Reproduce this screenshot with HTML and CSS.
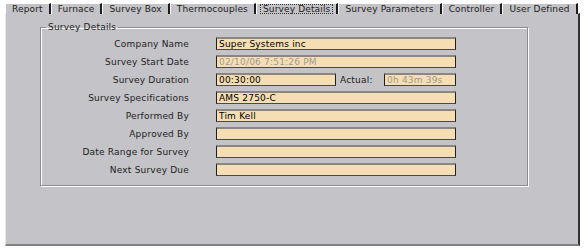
FILE: index.html
```html
<!DOCTYPE html>
<html lang="en">
<head>
  <meta charset="UTF-8" />
  <title>Survey Details</title>
  <link rel="stylesheet" href="styles.css">
</head>
<body>

  <div class="tabs">
    <span class="tab">Report</span>
    <span class="tab">Furnace</span>
    <span class="tab">Survey Box</span>
    <span class="tab">Thermocouples</span>
    <span class="tab active"><span class="focus">Survey Details</span></span>
    <span class="tab">Survey Parameters</span>
    <span class="tab">Controller</span>
    <span class="tab">User Defined</span>
  </div>

  <section class="panel">
    <fieldset class="group">
      <legend>Survey Details</legend>

      <div class="form">
        <label>Company Name</label>
        <div class="field">Super Systems inc</div>

        <label>Survey Start Date</label>
        <div class="field disabled">02/10/06 7:51:26 PM</div>

        <label>Survey Duration</label>
        <div class="duration-row">
          <div class="field">00:30:00</div>
          <span class="actual-label">Actual:</span>
          <div class="field disabled">0h 43m 39s</div>
        </div>

        <label>Survey Specifications</label>
        <div class="field">AMS 2750-C</div>

        <label>Performed By</label>
        <div class="field">Tim Kell</div>

        <label>Approved By</label>
        <div class="field"></div>

        <label>Date Range for Survey</label>
        <div class="field"></div>

        <label>Next Survey Due</label>
        <div class="field"></div>
      </div>
    </fieldset>
  </section>

</body>
</html>
```

FILE: styles.css
```css
body {
  margin: 0;
  padding: 3px 7px 0 5px;
  background: #fff;
  font-family: "DejaVu Sans", sans-serif;
  font-size: 9px;
  letter-spacing: 0.2px;
  color: #222;
}

.tabs {
  display: flex;
  height: 10px;
  letter-spacing: 0.15px;
}

.tab {
  display: block;
  height: 11px;
  line-height: 10px;
  padding: 0 6px;
  background: #c4c3c7;
  border-top: 1px solid #fff;
  border-left: 1px solid #fff;
  border-right: 2px solid #1c1c1c;
  box-sizing: border-box;
  white-space: nowrap;
}

.tab.active {
  padding: 0 3px;
}

.focus {
  display: inline-block;
  line-height: 8px;
  padding: 0 2px;
  border: 1px dotted #333;
}

.panel {
  height: 233px;
  box-sizing: border-box;
  background: #c4c3c7;
  border-top: 1px solid #e6e5e8;
  border-left: 1px solid #e6e5e8;
  border-right: 2px solid #333;
  border-bottom: 2px solid #808080;
  padding: 8px 0 0 34px;
}

.group {
  width: 488px;
  box-sizing: border-box;
  margin: 0;
  padding: 4px 0 9px 0;
  border: 1px solid #8e8c90;
  box-shadow: inset 1px 1px 0 #fff, 1px 1px 0 #fff;
}

.group legend {
  margin-left: 5px;
  padding: 0 2px;
  line-height: 11px;
}

.form {
  display: grid;
  grid-template-columns: 148px 240px;
  column-gap: 27px;
  row-gap: 5px;
  align-items: center;
}

.form label {
  text-align: right;
}

.field {
  height: 13px;
  box-sizing: border-box;
  background: #f5deb3;
  border-top: 2px solid #8b8780;
  border-left: 1px solid #1e1e1e;
  border-right: 1px solid #1e1e1e;
  border-bottom: 1px solid #4a4a4a;
  padding: 0 2px;
  line-height: 10px;
  color: #000;
  white-space: nowrap;
  overflow: hidden;
}

.field.disabled {
  color: #a09a90;
}

.duration-row {
  display: grid;
  grid-template-columns: 120px 1fr 72px;
  column-gap: 4px;
  align-items: center;
}
```
